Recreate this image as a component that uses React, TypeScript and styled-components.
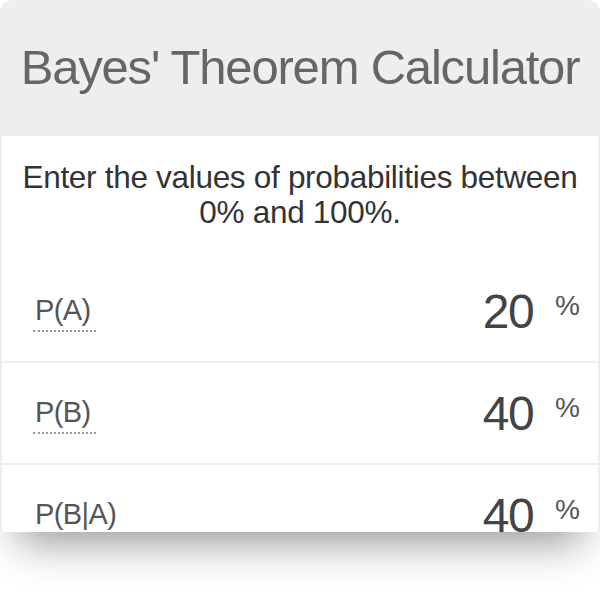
import React from 'react';
import styled, {createGlobalStyle} from "styled-components";

const GlobalStyle = createGlobalStyle`
    html, body {
        margin: 0;
        padding: 0;
        background: #ffffff;
        font-family: "Liberation Sans", Arial, sans-serif;
    }
`

const rows = [
    {label: 'P(A)', value: '20', underline: true},
    {label: 'P(B)', value: '40', underline: true},
    {label: 'P(B|A)', value: '40', underline: true},
]

const Field = ({label, value, underline}: {label: string, value: string, underline: boolean}) => (
    <Row>
        <Label underline={underline}>{label}</Label>
        <ValueBox>
            <Value>{value}</Value>
            <Unit>%</Unit>
        </ValueBox>
    </Row>
)

export default function App() {
    return (
        <Page>
            <GlobalStyle/>
            <Card>
                <Header>
                    <Title>Bayes' Theorem Calculator</Title>
                </Header>
                <Body>
                    <Block>
                        <Intro>Enter the values of probabilities between 0% and 100%.</Intro>
                        <Field {...rows[0]}/>
                    </Block>
                    <Block>
                        <Field {...rows[1]}/>
                    </Block>
                    <Block>
                        <Field {...rows[2]}/>
                    </Block>
                </Body>
            </Card>
        </Page>
    );
}

const Page = styled.div`
    width: 600px;
    height: 600px;
    background: #ffffff;
    overflow: hidden;
`

const Card = styled.div`
    width: 600px;
    height: 532px;
    overflow: hidden;
    background: #eeeeee;
    border-radius: 12px 12px 0 0;
    box-shadow: 0 28px 40px -18px rgba(0, 0, 0, 0.42);
    display: flex;
    flex-direction: column;
`

const Header = styled.div`
    height: 136px;
    display: flex;
    align-items: center;
    justify-content: center;
    flex-shrink: 0;
`

const Title = styled.h1`
    margin: 0;
    font-size: 49px;
    font-weight: 400;
    letter-spacing: -1.2px;
    color: #666666;
    padding-bottom: 2px;
`

const Body = styled.div`
    display: flex;
    flex-direction: column;
    gap: 2px;
    padding: 0 2px;
`

const Block = styled.div`
    background: #ffffff;
    display: flex;
    flex-direction: column;
`

const Intro = styled.p`
    margin: 0;
    padding: 24px 10px 31px;
    font-size: 31.5px;
    line-height: 35px;
    letter-spacing: -0.3px;
    color: #333333;
    text-align: center;
`

const Row = styled.div`
    height: 100px;
    display: flex;
    align-items: center;
    justify-content: space-between;
    padding: 4px 18px 0 31px;
    box-sizing: border-box;
`

const Label = styled.span<{underline: boolean}>`
    font-size: 29px;
    color: #555555;
    letter-spacing: -0.6px;
    padding: 0 5px 3px 2px;
    border-bottom: ${p => p.underline ? '2px dotted #999999' : 'none'};
`

const ValueBox = styled.div`
    display: flex;
    align-items: flex-start;
`

const Value = styled.span`
    font-size: 48px;
    color: #444444;
    letter-spacing: -1.5px;
    margin-top: -3px;
`

const Unit = styled.span`
    font-size: 28px;
    color: #555555;
    margin-left: 22px;
    margin-top: 3px;
`
